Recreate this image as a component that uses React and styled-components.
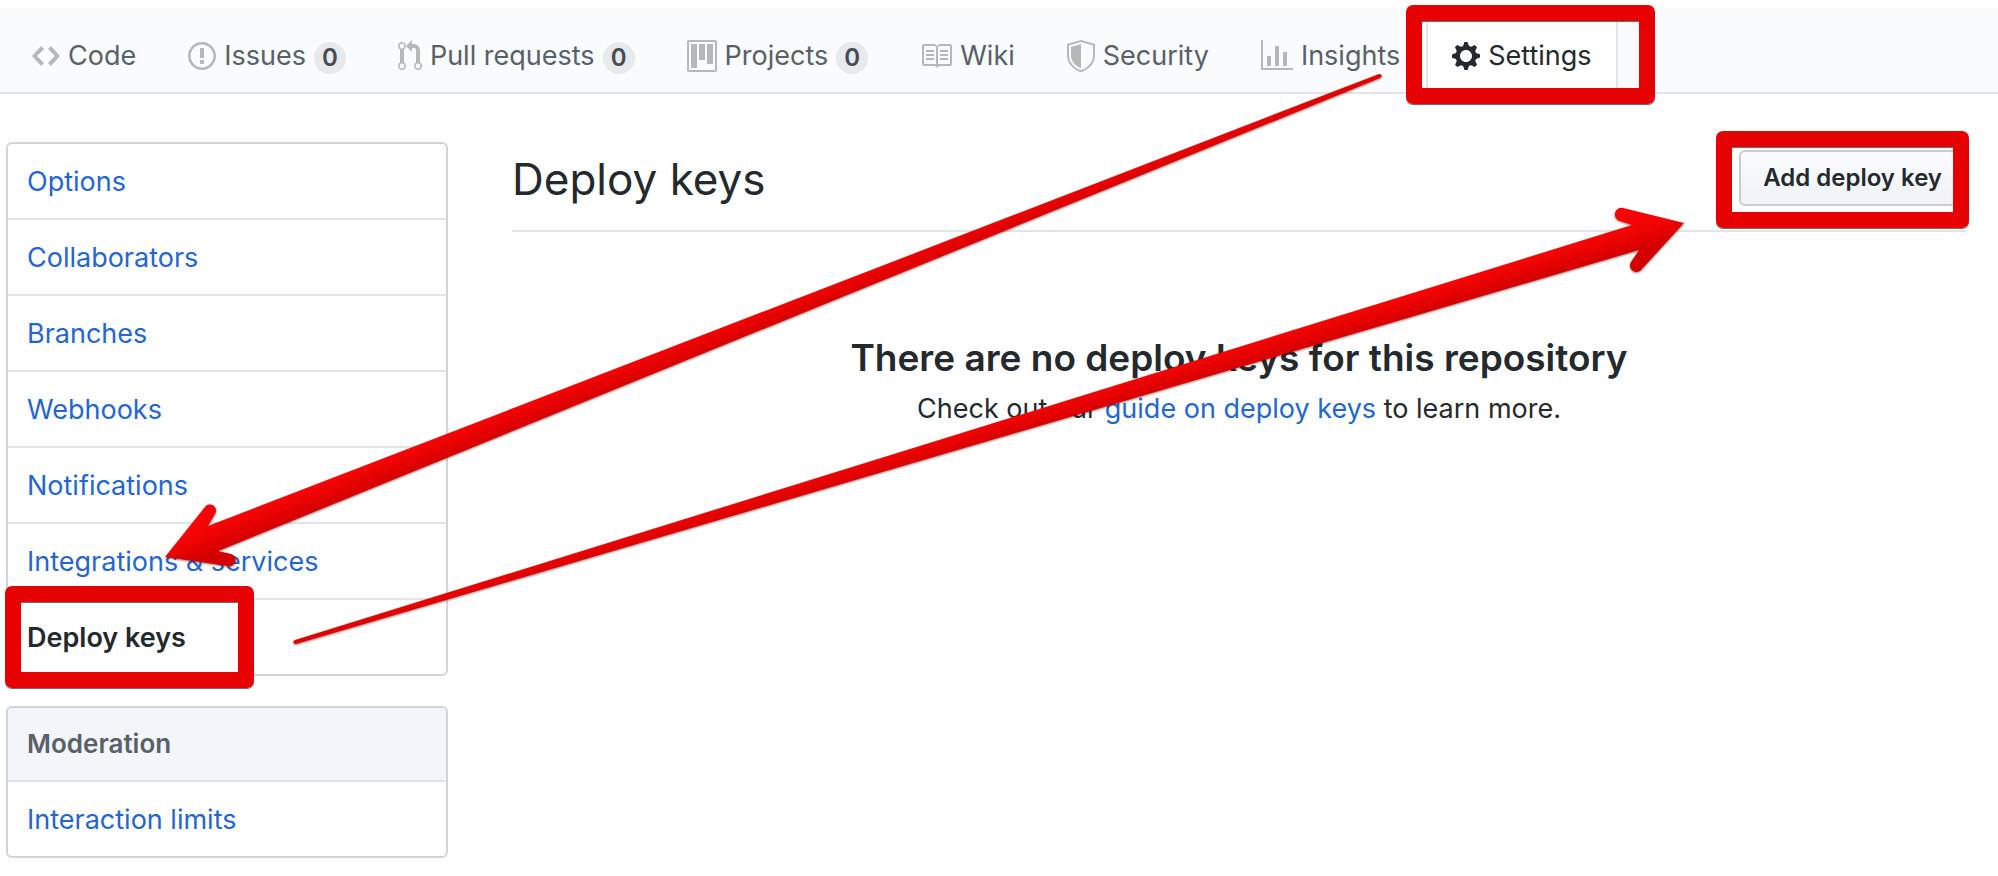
import React from "react";
import styled, { createGlobalStyle } from "styled-components";

const GlobalStyle = createGlobalStyle`
  * { box-sizing: border-box; }
  body {
    margin: 0;
    background: #fff;
    color: #24292e;
    font: 27px/42px Inter, "Liberation Sans", sans-serif;
  }
`;

const ICONS = {
  code: { w: 14, d: "M9.5 3L8 4.5 11.5 8 8 11.5 9.5 13 14 8 9.5 3zm-5 0L0 8l4.5 5L6 11.5 2.5 8 6 4.5 4.5 3z" },
  issue: { w: 14, d: "M7 2.3c3.14 0 5.7 2.56 5.7 5.7s-2.56 5.7-5.7 5.7A5.71 5.71 0 0 1 1.3 8c0-3.14 2.56-5.7 5.7-5.7zM7 1C3.14 1 0 4.14 0 8s3.14 7 7 7 7-3.14 7-7-3.14-7-7-7zm1 3H6v5h2V4zm0 6H6v2h2v-2z" },
  pull: { w: 12, d: "M11 11.28V5c-.03-.78-.34-1.47-.94-2.06C9.46 2.35 8.78 2.03 8 2H7V0L4 3l3 3V4h1c.27.02.48.11.69.31.21.2.3.42.31.69v6.28A1.993 1.993 0 0 0 10 15a1.993 1.993 0 0 0 1-3.72zm-1 2.92c-.66 0-1.2-.55-1.2-1.2 0-.65.55-1.2 1.2-1.2.65 0 1.2.55 1.2 1.2 0 .65-.55 1.2-1.2 1.2zM4 3c0-1.11-.89-2-2-2a1.993 1.993 0 0 0-1 3.72v6.56A1.993 1.993 0 0 0 2 15a1.993 1.993 0 0 0 1-3.72V4.72c.59-.34 1-.98 1-1.72zm-.8 10c0 .66-.55 1.2-1.2 1.2-.65 0-1.2-.55-1.2-1.2 0-.65.55-1.2 1.2-1.2.65 0 1.2.55 1.2 1.2zM2 4.2C1.34 4.2.8 3.65.8 3c0-.65.55-1.2 1.2-1.2.65 0 1.2.55 1.2 1.2 0 .65-.55 1.2-1.2 1.2z" },
  project: { w: 15, d: "M10 12h3V2h-3v10zm-4-2h3V2H6v8zm-4 4h3V2H2v12zm-1 1h13V1H1v14zM14 0H1a1 1 0 0 0-1 1v14a1 1 0 0 0 1 1h13a1 1 0 0 0 1-1V1a1 1 0 0 0-1-1z" },
  book: { w: 16, d: "M3 5h4v1H3V5zm0 3h4V7H3v1zm0 2h4V9H3v1zm11-5h-4v1h4V5zm0 2h-4v1h4V7zm0 2h-4v1h4V9zm2-6v9c0 .55-.45 1-1 1H9.5l-1 1-1-1H2c-.55 0-1-.45-1-1V3c0-.55.45-1 1-1h5.5l1 1 1-1H15c.55 0 1 .45 1 1zm-8 .5L7.5 3H2v9h6V3.5zm7-.5H9.5l-.5.5V12h6V3z" },
  shield: { w: 14, d: "M0 2l7-2 7 2v6.02C14 12.69 8.69 16 7 16c-1.69 0-7-3.31-7-7.98V2zm1 .75L7 1l6 1.75v5.268C13 12.104 8.449 15 7 15c-1.449 0-6-2.896-6-6.982V2.75zm1 .75L7 2v12c-1.207 0-5-2.482-5-5.985V3.5z" },
  graph: { w: 16, d: "M16 14v1H0V0h1v14h15zM5 13H3V8h2v5zm4 0H7V3h2v10zm4 0h-2V6h2v7z" },
  gear: { w: 14, d: "M14 8.77v-1.6l-1.94-.64-.45-1.09.88-1.84-1.13-1.13-1.81.91-1.09-.45-.69-1.92h-1.6l-.63 1.94-1.11.45-1.84-.88-1.13 1.13.91 1.81-.45 1.09L0 7.23v1.59l1.94.64.45 1.09-.88 1.84 1.13 1.13 1.81-.91 1.09.45.69 1.92h1.59l.63-1.94 1.11-.45 1.84.88 1.13-1.13-.92-1.81.47-1.09L14 8.75v.02zM7 11c-1.66 0-3-1.34-3-3s1.34-3 3-3 3 1.34 3 3-1.34 3-3 3z" },
};

const Page = styled.div`
  position: relative;
  padding-top: 8px;
  overflow: hidden;
`;

const TabBar = styled.nav`
  display: flex;
  align-items: flex-end;
  height: 86px;
  padding-left: 6px;
  background: #fafbfc;
  border-bottom: 2px solid #e1e4e8;
`;

const Tab = styled.a`
  position: relative;
  display: flex;
  align-items: center;
  height: 76px;
  padding: 2px 24px 0;
  border: 2px solid ${(p) => (p.$active ? "#e1e4e8" : "transparent")};
  border-bottom: 0;
  border-radius: 6px 6px 0 0;
  background: ${(p) => (p.$active ? "#fff" : "transparent")};
  color: ${(p) => (p.$active ? "#24292e" : "#586069")};
  text-decoration: none;
  white-space: nowrap;
`;

const Glyph = styled.svg`
  flex: none;
  height: 32px;
  margin-right: 8px;
  fill: ${(p) => (p.$active ? "#24292e" : "#b5b7b9")};
`;

const Counter = styled.span`
  min-width: 32px;
  height: 32px;
  margin: 4px 0 0 8px;
  border-radius: 16px;
  background: #e8e9eb;
  color: #444d56;
  font-size: 24px;
  font-weight: 600;
  line-height: 32px;
  text-align: center;
`;

const Columns = styled.div`
  display: flex;
  align-items: flex-start;
  gap: 64px;
  padding: 48px 32px 18px 6px;
`;

const Sidebar = styled.aside`
  flex: none;
  display: flex;
  flex-direction: column;
  gap: 30px;
  width: 442px;
`;

const Menu = styled.nav`
  border: 2px solid #d1d5da;
  border-radius: 6px;
  background: #fff;
`;

const MenuHeading = styled.h2`
  margin: 0;
  padding: 15px 19px;
  border-bottom: 2px solid #e1e4e8;
  border-radius: 4px 4px 0 0;
  background: #f3f5f8;
  color: #586069;
  font-size: 26px;
  font-weight: 600;
  line-height: 42px;
`;

const MenuItem = styled.a`
  position: relative;
  display: block;
  padding: 17px 19px 15px;
  color: ${(p) => (p.$active ? "#24292e" : "#2366d1")};
  font-weight: ${(p) => (p.$active ? 600 : 400)};
  text-decoration: none;

  & + & {
    border-top: 2px solid #e1e4e8;
  }
`;

const Main = styled.main`
  flex: 1;
  min-width: 0;
`;

const Subhead = styled.header`
  display: flex;
  align-items: flex-start;
  justify-content: space-between;
  height: 90px;
  border-bottom: 2px solid #e1e4e8;
`;

const Title = styled.h1`
  margin: 0;
  font-size: 44px;
  font-weight: 400;
  line-height: 74px;
`;

const ButtonWrap = styled.div`
  position: relative;
  padding-top: 8px;
`;

const Button = styled.button`
  height: 56px;
  padding: 0 22px;
  border: 2px solid #c9ccd0;
  border-radius: 6px;
  background: linear-gradient(#fafbfc, #eff3f6);
  color: #24292e;
  font: 600 24px/40px Inter, "Liberation Sans", sans-serif;
`;

const Blank = styled.section`
  padding-top: 96px;
  text-align: center;
`;

const BlankTitle = styled.h2`
  margin: 0;
  font-size: 37px;
  font-weight: 600;
  line-height: 60px;
`;

const BlankText = styled.p`
  margin: 0;
`;

const Link = styled.a`
  color: #2366d1;
  text-decoration: none;
`;

const Frame = styled.span`
  position: absolute;
  z-index: 1;
  inset: ${(p) => p.$inset};
  width: ${(p) => p.$width};
  border: 16px solid #e60202;
  border-radius: 7px;
  box-shadow: 0 1px 0 #7a6a6a, inset 0 1px 0 #7a6a6a;
  pointer-events: none;
`;

const Arrows = styled.svg`
  position: absolute;
  z-index: 2;
  top: 0;
  left: 0;
  pointer-events: none;
  filter: drop-shadow(0 1px 1px rgba(40, 0, 0, 0.5));
`;

const tabs = [
  { icon: "code", label: "Code" },
  { icon: "issue", label: "Issues", count: 0 },
  { icon: "pull", label: "Pull requests", count: 0 },
  { icon: "project", label: "Projects", count: 0 },
  { icon: "book", label: "Wiki" },
  { icon: "shield", label: "Security" },
  { icon: "graph", label: "Insights" },
  { icon: "gear", label: "Settings", active: true },
];

const options = ["Options", "Collaborators", "Branches", "Webhooks", "Notifications", "Integrations & services"];

function Icon({ name, active }) {
  const { w, d } = ICONS[name];
  return (
    <Glyph $active={active} width={w * 2} viewBox={`0 0 ${w} 16`} aria-hidden="true">
      <path fillRule="evenodd" d={d} />
    </Glyph>
  );
}

export default function App() {
  return (
    <Page>
      <GlobalStyle />
      <TabBar aria-label="Repository">
        {tabs.map((t) => (
          <Tab key={t.label} href="#" $active={t.active}>
            <Icon name={t.icon} active={t.active} />
            {t.label}
            {t.count !== undefined && <Counter>{t.count}</Counter>}
            {t.active && <Frame $inset="-13px auto -12px -22px" $width="249px" />}
          </Tab>
        ))}
      </TabBar>
      <Columns>
        <Sidebar>
          <Menu aria-label="Settings">
            {options.map((o) => (
              <MenuItem key={o} href="#">{o}</MenuItem>
            ))}
            <MenuItem href="#" $active aria-current="page">
              Deploy keys
              <Frame $inset="-14px auto -14px -3px" $width="249px" />
            </MenuItem>
          </Menu>
          <Menu aria-label="Moderation">
            <MenuHeading>Moderation</MenuHeading>
            <MenuItem href="#">Interaction limits</MenuItem>
          </Menu>
        </Sidebar>
        <Main>
          <Subhead>
            <Title>Deploy keys</Title>
            <ButtonWrap>
              <Button type="button">Add deploy key</Button>
              <Frame $inset="-11px -3px -22px -23px" />
            </ButtonWrap>
          </Subhead>
          <Blank>
            <BlankTitle>There are no deploy keys for this repository</BlankTitle>
            <BlankText>
              Check out our <Link href="#">guide on deploy keys</Link> to learn more.
            </BlankText>
          </Blank>
        </Main>
      </Columns>
      <Arrows width="1700" height="700" viewBox="0 0 1700 700" aria-hidden="true">
        <defs>
          <linearGradient id="down" gradientUnits="userSpaceOnUse" x1="769" y1="307" x2="777" y2="327">
            <stop offset="0" stopColor="#f40404" />
            <stop offset="1" stopColor="#d40000" />
          </linearGradient>
          <linearGradient id="up" gradientUnits="userSpaceOnUse" x1="987" y1="423" x2="993" y2="443">
            <stop offset="0" stopColor="#f40404" />
            <stop offset="1" stopColor="#d40000" />
          </linearGradient>
        </defs>
        <path fill="url(#down)" d="M1379 74L208 526L215 514A6 6 0 0 0 205 507L165 557L228 566A6 6 0 0 0 231 554L218 551L1380 78A2 2 0 0 0 1379 74Z" />
        <path fill="url(#up)" d="M295 640L1632 225L1620 221A6 6 0 0 1 1623 208L1684 223L1642 269A6 6 0 0 1 1631 262L1639 250L296 644A2 2 0 0 1 295 640Z" />
      </Arrows>
    </Page>
  );
}
